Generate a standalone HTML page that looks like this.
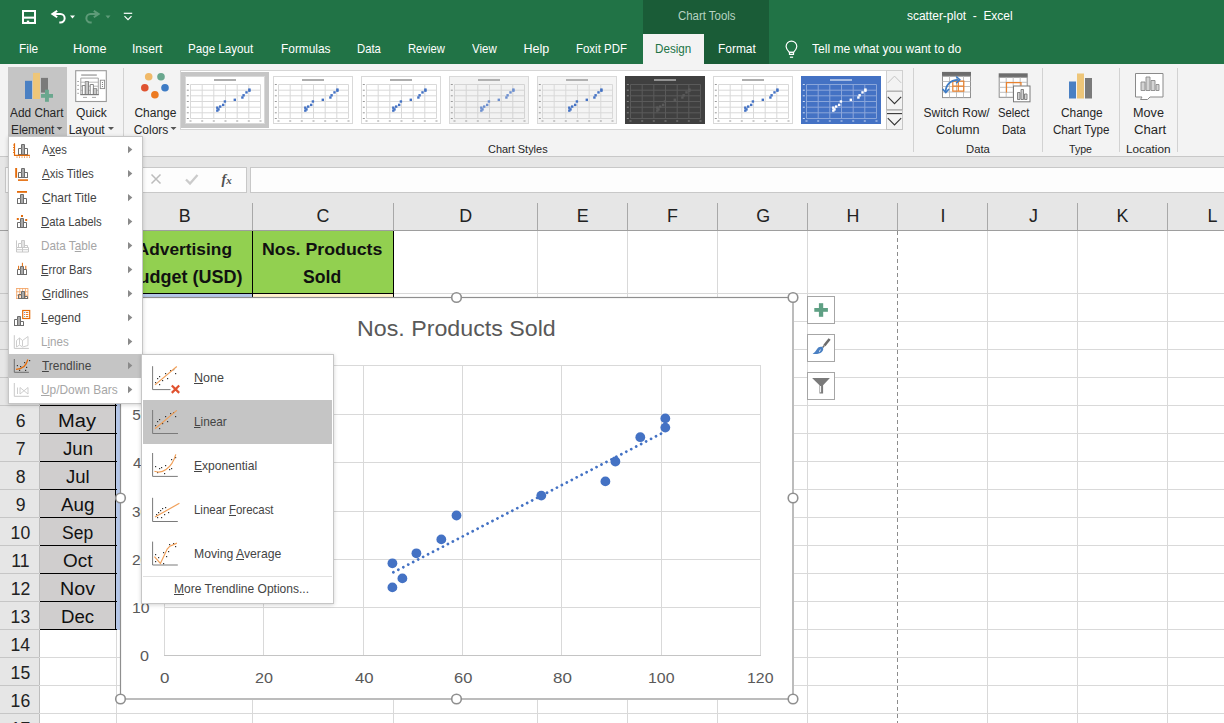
<!DOCTYPE html>
<html><head><meta charset="utf-8">
<style>
*{margin:0;padding:0;box-sizing:border-box}
html,body{width:1224px;height:723px;overflow:hidden;background:#fff;font-family:"Liberation Sans",sans-serif;position:relative}
.a{position:absolute}
.t{position:absolute;white-space:pre;line-height:1;transform-origin:0 0}
.sep{position:absolute;width:1px;background:#d2d2d2;top:68px;height:84px}
u{text-decoration:underline;text-decoration-thickness:1px;text-underline-offset:0.5px}
</style></head><body>
<!-- title -->
<div class="a" style="left:0;top:0;width:1224px;height:64px;background:#217346"></div>
<div class="a" style="left:643px;top:0;width:126px;height:64px;background:#1a5c37"></div>
<svg class="a" style="left:0;top:0" width="160" height="32">
 <path d="M23 11h12v12h-12z" fill="none" stroke="#fff" stroke-width="2"/>
 <rect x="24" y="16.6" width="10" height="2.1" fill="#fff"/>
 <rect x="26.8" y="20.6" width="2.4" height="2" fill="#fff"/>
 <path d="M53.5 14.1h7a4.15 4.15 0 0 1 0 8.3h-1.2" fill="none" stroke="#fff" stroke-width="2"/>
 <path d="M50.6 14.1l6-4 1.2 1.7-3.6 2.3 3.6 2.3-1.2 1.7z" fill="#fff"/>
 <path d="M70 15.5h5l-2.5 3z" fill="#fff"/>
 <path d="M97.5 14.1h-7a4.15 4.15 0 0 0 0 8.3h1.2" fill="none" stroke="#5e9b78" stroke-width="2"/>
 <path d="M100.4 14.1l-6-4-1.2 1.7 3.6 2.3-3.6 2.3 1.2 1.7z" fill="#5e9b78"/>
 <path d="M105.5 15.5h5l-2.5 3z" fill="#5e9b78"/>
 <g fill="none" stroke="#fff" stroke-width="1.2">
  <path d="M123.8 13.3h8.4"/>
  <path d="M124.5 16.2l3.5 3.5 3.5-3.5"/>
 </g>
</svg>
<div class="a" style="left:643px;top:34px;width:61px;height:30px;background:#f3f3f3"></div>
<svg class="a" style="left:783px;top:38px" width="20" height="22">
 <g fill="none" stroke="#fff" stroke-width="1.2">
  <path d="M6.3 14.3C4.2 12.1 3.1 10.5 3.1 8.4a5.35 5.35 0 0 1 10.7 0c0 2.1-1.1 3.7-3.2 5.9z"/>
  <path d="M6.5 14.4h4v2h-4z"/>
  <path d="M6.9 19.2h3.2" stroke-width="1.2"/>
 </g>
</svg>
<div class="t" style="left:678.03px;top:10.43px;font-size:12.01px;color:#b7d3c2;transform:scaleX(0.950)">Chart Tools</div>
<div class="t" style="left:906.86px;top:10.43px;font-size:12.01px;color:#fff;transform:scaleX(0.996)">scatter-plot  -  Excel</div>
<div class="t" style="left:19.45px;top:43.31px;font-size:12.54px;color:#fff;transform:scaleX(0.949)">File</div>
<div class="t" style="left:72.89px;top:43.31px;font-size:12.54px;color:#fff;transform:scaleX(1.006)">Home</div>
<div class="t" style="left:131.71px;top:43.31px;font-size:12.54px;color:#fff;transform:scaleX(0.968)">Insert</div>
<div class="t" style="left:188.37px;top:43.31px;font-size:12.54px;color:#fff;transform:scaleX(0.926)">Page Layout</div>
<div class="t" style="left:280.85px;top:43.31px;font-size:12.54px;color:#fff;transform:scaleX(0.949)">Formulas</div>
<div class="t" style="left:356.70px;top:43.31px;font-size:12.54px;color:#fff;transform:scaleX(0.901)">Data</div>
<div class="t" style="left:407.70px;top:43.31px;font-size:12.54px;color:#fff;transform:scaleX(0.895)">Review</div>
<div class="t" style="left:472.10px;top:43.31px;font-size:12.54px;color:#fff;transform:scaleX(0.917)">View</div>
<div class="t" style="left:523.40px;top:43.31px;font-size:12.54px;color:#fff">Help</div>
<div class="t" style="left:575.58px;top:43.31px;font-size:12.54px;color:#fff;transform:scaleX(0.914)">Foxit PDF</div>
<div class="t" style="left:654.67px;top:43.31px;font-size:12.54px;color:#217346;transform:scaleX(0.929)">Design</div>
<div class="t" style="left:717.74px;top:43.31px;font-size:12.54px;color:#fff;transform:scaleX(0.952)">Format</div>
<div class="t" style="left:811.56px;top:43.31px;font-size:12.54px;color:#fff;transform:scaleX(0.965)">Tell me what you want to do</div>
<!-- ribbon -->
<div class="a" style="left:0;top:64px;width:1224px;height:93px;background:#f3f3f3;border-bottom:1px solid #c8c8c8"></div>
<div class="a" style="left:8px;top:67px;width:59px;height:70px;background:#c5c5c5"></div>
<svg class="a" style="left:0;top:64px" width="125" height="40">
 <rect x="25" y="16.8" width="7" height="18.2" fill="#4a80c3"/>
 <rect x="33" y="8.9" width="7" height="26.1" fill="#eec679"/>
 <rect x="41" y="13.9" width="7" height="14.7" fill="#7a7a7a"/>
 <rect x="41" y="30" width="12" height="3.8" fill="#6aa78e"/>
 <rect x="45" y="25.7" width="3.9" height="12.1" fill="#6aa78e"/>
 <rect x="75.7" y="6.7" width="30.6" height="30.8" fill="#fff" stroke="#9a9a9a" stroke-width="1.1"/>
 <rect x="81.2" y="10.3" width="15.6" height="1.5" fill="#a8a8a8"/>
 <path d="M80.8 30.6V14.1h17.5v16.5" fill="none" stroke="#9a9a9a" stroke-width="0.9"/>
 <path d="M80.8 18.2h17.5M80.8 22.2h17.5M80.8 26.3h17.5" stroke="#b0b0b0" stroke-width="0.9"/>
 <path d="M82.3 30.5v-9h3v9zM85.3 30.5v-13h3.2v13zM90.2 30.5v-10h3.2v10zM93.4 30.5v-6h3.2v6z" fill="#fff" stroke="#7a7a7a" stroke-width="0.9"/>
 <path d="M85.8 30v-12.2h2.2v12.2zM93.9 30v-5.2h2.2v5.2z" fill="#c9c9c9"/>
 <path d="M80.3 30.6h18.5" stroke="#7a7a7a" stroke-width="1.2"/>
 <path d="M77.2 17.5h1.8M77.2 21.4h1.8M77.2 25.4h1.8M77.2 29.3h1.8M83 33.4h4M92 33.4h4" stroke="#a0a0a0" stroke-width="0.9"/>
 <rect x="100.3" y="16.2" width="4.3" height="8.4" fill="#fff" stroke="#8a8a8a" stroke-width="0.9"/>
 <path d="M102.45 18v1M102.45 20v1M102.45 22v1" stroke="#7a7a7a" stroke-width="1"/>
</svg>
<svg class="a" style="left:125px;top:64px" width="55" height="40">
 <circle cx="23.7" cy="12.8" r="3.8" fill="#f0b968"/>
 <circle cx="36" cy="12.8" r="3.8" fill="#6aa78e"/>
 <circle cx="19.8" cy="23.8" r="3.8" fill="#df5330"/>
 <circle cx="40" cy="23.8" r="3.8" fill="#3e7cc5"/>
 <circle cx="29.9" cy="30.8" r="3.8" fill="#ec7a21"/>
</svg>
<div class="sep" style="left:123px"></div>
<svg class="a" style="left:0;top:120px" width="180" height="14">
 <path d="M56.5 7h6l-3 3z M108 7h6l-3 3z M170.5 7h6l-3 3z" fill="#555"/>
</svg>
<!-- gallery -->
<div class="a" style="left:180px;top:70px;width:706px;height:60px;background:#fff;border:1px solid #d5d5d5;border-right:none"></div>
<div class="a" style="left:181px;top:72px;width:88px;height:56px;background:#c6c6c6"></div>
<div class="a" style="left:185px;top:76px;width:80px;height:48px;background:#fff"></div>
<svg class="a" style="left:185px;top:76px" width="80" height="48"><rect x="0.5" y="0.5" width="79" height="47" fill="#fff" stroke="#d9d9d9"/><rect x="29" y="3.3" width="22" height="1.4" fill="#666" opacity="0.75"/><line x1="5.5" y1="8.5" x2="5.5" y2="42.5" stroke="#d9d9d9" stroke-width="1"/><line x1="17.2" y1="8.5" x2="17.2" y2="42.5" stroke="#d9d9d9" stroke-width="1"/><line x1="28.8" y1="8.5" x2="28.8" y2="42.5" stroke="#d9d9d9" stroke-width="1"/><line x1="40.5" y1="8.5" x2="40.5" y2="42.5" stroke="#d9d9d9" stroke-width="1"/><line x1="52.2" y1="8.5" x2="52.2" y2="42.5" stroke="#d9d9d9" stroke-width="1"/><line x1="63.8" y1="8.5" x2="63.8" y2="42.5" stroke="#d9d9d9" stroke-width="1"/><line x1="75.5" y1="8.5" x2="75.5" y2="42.5" stroke="#d9d9d9" stroke-width="1"/><line x1="5.5" y1="8.5" x2="75.5" y2="8.5" stroke="#d9d9d9" stroke-width="1"/><line x1="5.5" y1="14.2" x2="75.5" y2="14.2" stroke="#d9d9d9" stroke-width="1"/><line x1="5.5" y1="19.8" x2="75.5" y2="19.8" stroke="#d9d9d9" stroke-width="1"/><line x1="5.5" y1="25.5" x2="75.5" y2="25.5" stroke="#d9d9d9" stroke-width="1"/><line x1="5.5" y1="31.2" x2="75.5" y2="31.2" stroke="#d9d9d9" stroke-width="1"/><line x1="5.5" y1="36.8" x2="75.5" y2="36.8" stroke="#d9d9d9" stroke-width="1"/><line x1="5.5" y1="42.5" x2="75.5" y2="42.5" stroke="#d9d9d9" stroke-width="1"/><rect x="4.5" y="44.5" width="2" height="1" fill="#999"/><rect x="1.8" y="8.0" width="2" height="1" fill="#999"/><rect x="16.2" y="44.5" width="2" height="1" fill="#999"/><rect x="1.8" y="13.7" width="2" height="1" fill="#999"/><rect x="27.8" y="44.5" width="2" height="1" fill="#999"/><rect x="1.8" y="19.3" width="2" height="1" fill="#999"/><rect x="39.5" y="44.5" width="2" height="1" fill="#999"/><rect x="1.8" y="25.0" width="2" height="1" fill="#999"/><rect x="51.2" y="44.5" width="2" height="1" fill="#999"/><rect x="1.8" y="30.7" width="2" height="1" fill="#999"/><rect x="62.8" y="44.5" width="2" height="1" fill="#999"/><rect x="1.8" y="36.3" width="2" height="1" fill="#999"/><rect x="74.5" y="44.5" width="2" height="1" fill="#999"/><rect x="1.8" y="42.0" width="2" height="1" fill="#999"/><rect x="31.1" y="33.4" width="2.4" height="2.4" fill="#4472c4"/><rect x="31.1" y="30.5" width="2.4" height="2.4" fill="#4472c4"/><rect x="32.3" y="32.2" width="2.4" height="2.4" fill="#4472c4"/><rect x="34.0" y="29.4" width="2.4" height="2.4" fill="#4472c4"/><rect x="37.0" y="27.7" width="2.4" height="2.4" fill="#4472c4"/><rect x="38.7" y="24.3" width="2.4" height="2.4" fill="#4472c4"/><rect x="48.6" y="22.6" width="2.4" height="2.4" fill="#4472c4"/><rect x="56.2" y="20.3" width="2.4" height="2.4" fill="#4472c4"/><rect x="57.4" y="18.1" width="2.4" height="2.4" fill="#4472c4"/><rect x="60.3" y="15.2" width="2.4" height="2.4" fill="#4472c4"/><rect x="63.2" y="13.5" width="2.4" height="2.4" fill="#4472c4"/><rect x="63.2" y="12.4" width="2.4" height="2.4" fill="#4472c4"/></svg>
<svg class="a" style="left:273px;top:76px" width="80" height="48"><rect x="0.5" y="0.5" width="79" height="47" fill="#fff" stroke="#d9d9d9"/><rect x="29" y="3.3" width="22" height="1.4" fill="#666" opacity="0.75"/><line x1="5.5" y1="8.5" x2="5.5" y2="42.5" stroke="#d9d9d9" stroke-width="1"/><line x1="17.2" y1="8.5" x2="17.2" y2="42.5" stroke="#d9d9d9" stroke-width="1"/><line x1="28.8" y1="8.5" x2="28.8" y2="42.5" stroke="#d9d9d9" stroke-width="1"/><line x1="40.5" y1="8.5" x2="40.5" y2="42.5" stroke="#d9d9d9" stroke-width="1"/><line x1="52.2" y1="8.5" x2="52.2" y2="42.5" stroke="#d9d9d9" stroke-width="1"/><line x1="63.8" y1="8.5" x2="63.8" y2="42.5" stroke="#d9d9d9" stroke-width="1"/><line x1="75.5" y1="8.5" x2="75.5" y2="42.5" stroke="#d9d9d9" stroke-width="1"/><line x1="5.5" y1="8.5" x2="75.5" y2="8.5" stroke="#d9d9d9" stroke-width="1"/><line x1="5.5" y1="14.2" x2="75.5" y2="14.2" stroke="#d9d9d9" stroke-width="1"/><line x1="5.5" y1="19.8" x2="75.5" y2="19.8" stroke="#d9d9d9" stroke-width="1"/><line x1="5.5" y1="25.5" x2="75.5" y2="25.5" stroke="#d9d9d9" stroke-width="1"/><line x1="5.5" y1="31.2" x2="75.5" y2="31.2" stroke="#d9d9d9" stroke-width="1"/><line x1="5.5" y1="36.8" x2="75.5" y2="36.8" stroke="#d9d9d9" stroke-width="1"/><line x1="5.5" y1="42.5" x2="75.5" y2="42.5" stroke="#d9d9d9" stroke-width="1"/><rect x="4.5" y="44.5" width="2" height="1" fill="#999"/><rect x="1.8" y="8.0" width="2" height="1" fill="#999"/><rect x="16.2" y="44.5" width="2" height="1" fill="#999"/><rect x="1.8" y="13.7" width="2" height="1" fill="#999"/><rect x="27.8" y="44.5" width="2" height="1" fill="#999"/><rect x="1.8" y="19.3" width="2" height="1" fill="#999"/><rect x="39.5" y="44.5" width="2" height="1" fill="#999"/><rect x="1.8" y="25.0" width="2" height="1" fill="#999"/><rect x="51.2" y="44.5" width="2" height="1" fill="#999"/><rect x="1.8" y="30.7" width="2" height="1" fill="#999"/><rect x="62.8" y="44.5" width="2" height="1" fill="#999"/><rect x="1.8" y="36.3" width="2" height="1" fill="#999"/><rect x="74.5" y="44.5" width="2" height="1" fill="#999"/><rect x="1.8" y="42.0" width="2" height="1" fill="#999"/><rect x="31.1" y="33.4" width="2.4" height="2.4" fill="#4472c4"/><rect x="31.1" y="30.5" width="2.4" height="2.4" fill="#4472c4"/><rect x="32.3" y="32.2" width="2.4" height="2.4" fill="#4472c4"/><rect x="34.0" y="29.4" width="2.4" height="2.4" fill="#4472c4"/><rect x="37.0" y="27.7" width="2.4" height="2.4" fill="#4472c4"/><rect x="38.7" y="24.3" width="2.4" height="2.4" fill="#4472c4"/><rect x="48.6" y="22.6" width="2.4" height="2.4" fill="#4472c4"/><rect x="56.2" y="20.3" width="2.4" height="2.4" fill="#4472c4"/><rect x="57.4" y="18.1" width="2.4" height="2.4" fill="#4472c4"/><rect x="60.3" y="15.2" width="2.4" height="2.4" fill="#4472c4"/><rect x="63.2" y="13.5" width="2.4" height="2.4" fill="#4472c4"/><rect x="63.2" y="12.4" width="2.4" height="2.4" fill="#4472c4"/></svg>
<svg class="a" style="left:361px;top:76px" width="80" height="48"><rect x="0.5" y="0.5" width="79" height="47" fill="#fff" stroke="#d9d9d9"/><rect x="29" y="3.3" width="22" height="1.4" fill="#666" opacity="0.75"/><line x1="5.5" y1="8.5" x2="5.5" y2="42.5" stroke="#d9d9d9" stroke-width="1"/><line x1="17.2" y1="8.5" x2="17.2" y2="42.5" stroke="#d9d9d9" stroke-width="1"/><line x1="28.8" y1="8.5" x2="28.8" y2="42.5" stroke="#d9d9d9" stroke-width="1"/><line x1="40.5" y1="8.5" x2="40.5" y2="42.5" stroke="#d9d9d9" stroke-width="1"/><line x1="52.2" y1="8.5" x2="52.2" y2="42.5" stroke="#d9d9d9" stroke-width="1"/><line x1="63.8" y1="8.5" x2="63.8" y2="42.5" stroke="#d9d9d9" stroke-width="1"/><line x1="75.5" y1="8.5" x2="75.5" y2="42.5" stroke="#d9d9d9" stroke-width="1"/><line x1="5.5" y1="8.5" x2="75.5" y2="8.5" stroke="#d9d9d9" stroke-width="1"/><line x1="5.5" y1="14.2" x2="75.5" y2="14.2" stroke="#d9d9d9" stroke-width="1"/><line x1="5.5" y1="19.8" x2="75.5" y2="19.8" stroke="#d9d9d9" stroke-width="1"/><line x1="5.5" y1="25.5" x2="75.5" y2="25.5" stroke="#d9d9d9" stroke-width="1"/><line x1="5.5" y1="31.2" x2="75.5" y2="31.2" stroke="#d9d9d9" stroke-width="1"/><line x1="5.5" y1="36.8" x2="75.5" y2="36.8" stroke="#d9d9d9" stroke-width="1"/><line x1="5.5" y1="42.5" x2="75.5" y2="42.5" stroke="#d9d9d9" stroke-width="1"/><rect x="4.5" y="44.5" width="2" height="1" fill="#999"/><rect x="1.8" y="8.0" width="2" height="1" fill="#999"/><rect x="16.2" y="44.5" width="2" height="1" fill="#999"/><rect x="1.8" y="13.7" width="2" height="1" fill="#999"/><rect x="27.8" y="44.5" width="2" height="1" fill="#999"/><rect x="1.8" y="19.3" width="2" height="1" fill="#999"/><rect x="39.5" y="44.5" width="2" height="1" fill="#999"/><rect x="1.8" y="25.0" width="2" height="1" fill="#999"/><rect x="51.2" y="44.5" width="2" height="1" fill="#999"/><rect x="1.8" y="30.7" width="2" height="1" fill="#999"/><rect x="62.8" y="44.5" width="2" height="1" fill="#999"/><rect x="1.8" y="36.3" width="2" height="1" fill="#999"/><rect x="74.5" y="44.5" width="2" height="1" fill="#999"/><rect x="1.8" y="42.0" width="2" height="1" fill="#999"/><rect x="31.1" y="33.4" width="2.4" height="2.4" fill="#4472c4"/><rect x="31.1" y="30.5" width="2.4" height="2.4" fill="#4472c4"/><rect x="32.3" y="32.2" width="2.4" height="2.4" fill="#4472c4"/><rect x="34.0" y="29.4" width="2.4" height="2.4" fill="#4472c4"/><rect x="37.0" y="27.7" width="2.4" height="2.4" fill="#4472c4"/><rect x="38.7" y="24.3" width="2.4" height="2.4" fill="#4472c4"/><rect x="48.6" y="22.6" width="2.4" height="2.4" fill="#4472c4"/><rect x="56.2" y="20.3" width="2.4" height="2.4" fill="#4472c4"/><rect x="57.4" y="18.1" width="2.4" height="2.4" fill="#4472c4"/><rect x="60.3" y="15.2" width="2.4" height="2.4" fill="#4472c4"/><rect x="63.2" y="13.5" width="2.4" height="2.4" fill="#4472c4"/><rect x="63.2" y="12.4" width="2.4" height="2.4" fill="#4472c4"/></svg>
<svg class="a" style="left:449px;top:76px" width="80" height="48"><rect x="0.5" y="0.5" width="79" height="47" fill="#f2f2f2" stroke="#d9d9d9"/><rect x="29" y="3.3" width="22" height="1.4" fill="#777" opacity="0.75"/><line x1="5.5" y1="8.5" x2="5.5" y2="42.5" stroke="#d4d4d4" stroke-width="1"/><line x1="17.2" y1="8.5" x2="17.2" y2="42.5" stroke="#d4d4d4" stroke-width="1"/><line x1="28.8" y1="8.5" x2="28.8" y2="42.5" stroke="#d4d4d4" stroke-width="1"/><line x1="40.5" y1="8.5" x2="40.5" y2="42.5" stroke="#d4d4d4" stroke-width="1"/><line x1="52.2" y1="8.5" x2="52.2" y2="42.5" stroke="#d4d4d4" stroke-width="1"/><line x1="63.8" y1="8.5" x2="63.8" y2="42.5" stroke="#d4d4d4" stroke-width="1"/><line x1="75.5" y1="8.5" x2="75.5" y2="42.5" stroke="#d4d4d4" stroke-width="1"/><line x1="5.5" y1="8.5" x2="75.5" y2="8.5" stroke="#d4d4d4" stroke-width="1"/><line x1="5.5" y1="14.2" x2="75.5" y2="14.2" stroke="#d4d4d4" stroke-width="1"/><line x1="5.5" y1="19.8" x2="75.5" y2="19.8" stroke="#d4d4d4" stroke-width="1"/><line x1="5.5" y1="25.5" x2="75.5" y2="25.5" stroke="#d4d4d4" stroke-width="1"/><line x1="5.5" y1="31.2" x2="75.5" y2="31.2" stroke="#d4d4d4" stroke-width="1"/><line x1="5.5" y1="36.8" x2="75.5" y2="36.8" stroke="#d4d4d4" stroke-width="1"/><line x1="5.5" y1="42.5" x2="75.5" y2="42.5" stroke="#d4d4d4" stroke-width="1"/><rect x="4.5" y="44.5" width="2" height="1" fill="#999"/><rect x="1.8" y="8.0" width="2" height="1" fill="#999"/><rect x="16.2" y="44.5" width="2" height="1" fill="#999"/><rect x="1.8" y="13.7" width="2" height="1" fill="#999"/><rect x="27.8" y="44.5" width="2" height="1" fill="#999"/><rect x="1.8" y="19.3" width="2" height="1" fill="#999"/><rect x="39.5" y="44.5" width="2" height="1" fill="#999"/><rect x="1.8" y="25.0" width="2" height="1" fill="#999"/><rect x="51.2" y="44.5" width="2" height="1" fill="#999"/><rect x="1.8" y="30.7" width="2" height="1" fill="#999"/><rect x="62.8" y="44.5" width="2" height="1" fill="#999"/><rect x="1.8" y="36.3" width="2" height="1" fill="#999"/><rect x="74.5" y="44.5" width="2" height="1" fill="#999"/><rect x="1.8" y="42.0" width="2" height="1" fill="#999"/><rect x="31.1" y="33.4" width="2.4" height="2.4" fill="#6d8fcf"/><rect x="31.1" y="30.5" width="2.4" height="2.4" fill="#6d8fcf"/><rect x="32.3" y="32.2" width="2.4" height="2.4" fill="#6d8fcf"/><rect x="34.0" y="29.4" width="2.4" height="2.4" fill="#6d8fcf"/><rect x="37.0" y="27.7" width="2.4" height="2.4" fill="#6d8fcf"/><rect x="38.7" y="24.3" width="2.4" height="2.4" fill="#6d8fcf"/><rect x="48.6" y="22.6" width="2.4" height="2.4" fill="#6d8fcf"/><rect x="56.2" y="20.3" width="2.4" height="2.4" fill="#6d8fcf"/><rect x="57.4" y="18.1" width="2.4" height="2.4" fill="#6d8fcf"/><rect x="60.3" y="15.2" width="2.4" height="2.4" fill="#6d8fcf"/><rect x="63.2" y="13.5" width="2.4" height="2.4" fill="#6d8fcf"/><rect x="63.2" y="12.4" width="2.4" height="2.4" fill="#6d8fcf"/></svg>
<svg class="a" style="left:537px;top:76px" width="80" height="48"><rect x="0.5" y="0.5" width="79" height="47" fill="#f4f4f4" stroke="#d9d9d9"/><rect x="29" y="3.3" width="22" height="1.4" fill="#777" opacity="0.75"/><line x1="5.5" y1="8.5" x2="5.5" y2="42.5" stroke="#d9d9d9" stroke-width="1"/><line x1="17.2" y1="8.5" x2="17.2" y2="42.5" stroke="#d9d9d9" stroke-width="1"/><line x1="28.8" y1="8.5" x2="28.8" y2="42.5" stroke="#d9d9d9" stroke-width="1"/><line x1="40.5" y1="8.5" x2="40.5" y2="42.5" stroke="#d9d9d9" stroke-width="1"/><line x1="52.2" y1="8.5" x2="52.2" y2="42.5" stroke="#d9d9d9" stroke-width="1"/><line x1="63.8" y1="8.5" x2="63.8" y2="42.5" stroke="#d9d9d9" stroke-width="1"/><line x1="75.5" y1="8.5" x2="75.5" y2="42.5" stroke="#d9d9d9" stroke-width="1"/><line x1="5.5" y1="8.5" x2="75.5" y2="8.5" stroke="#d9d9d9" stroke-width="1"/><line x1="5.5" y1="14.2" x2="75.5" y2="14.2" stroke="#d9d9d9" stroke-width="1"/><line x1="5.5" y1="19.8" x2="75.5" y2="19.8" stroke="#d9d9d9" stroke-width="1"/><line x1="5.5" y1="25.5" x2="75.5" y2="25.5" stroke="#d9d9d9" stroke-width="1"/><line x1="5.5" y1="31.2" x2="75.5" y2="31.2" stroke="#d9d9d9" stroke-width="1"/><line x1="5.5" y1="36.8" x2="75.5" y2="36.8" stroke="#d9d9d9" stroke-width="1"/><line x1="5.5" y1="42.5" x2="75.5" y2="42.5" stroke="#d9d9d9" stroke-width="1"/><rect x="4.5" y="44.5" width="2" height="1" fill="#999"/><rect x="1.8" y="8.0" width="2" height="1" fill="#999"/><rect x="16.2" y="44.5" width="2" height="1" fill="#999"/><rect x="1.8" y="13.7" width="2" height="1" fill="#999"/><rect x="27.8" y="44.5" width="2" height="1" fill="#999"/><rect x="1.8" y="19.3" width="2" height="1" fill="#999"/><rect x="39.5" y="44.5" width="2" height="1" fill="#999"/><rect x="1.8" y="25.0" width="2" height="1" fill="#999"/><rect x="51.2" y="44.5" width="2" height="1" fill="#999"/><rect x="1.8" y="30.7" width="2" height="1" fill="#999"/><rect x="62.8" y="44.5" width="2" height="1" fill="#999"/><rect x="1.8" y="36.3" width="2" height="1" fill="#999"/><rect x="74.5" y="44.5" width="2" height="1" fill="#999"/><rect x="1.8" y="42.0" width="2" height="1" fill="#999"/><rect x="31.1" y="33.4" width="2.4" height="2.4" fill="#4472c4"/><rect x="31.1" y="30.5" width="2.4" height="2.4" fill="#4472c4"/><rect x="32.3" y="32.2" width="2.4" height="2.4" fill="#4472c4"/><rect x="34.0" y="29.4" width="2.4" height="2.4" fill="#4472c4"/><rect x="37.0" y="27.7" width="2.4" height="2.4" fill="#4472c4"/><rect x="38.7" y="24.3" width="2.4" height="2.4" fill="#4472c4"/><rect x="48.6" y="22.6" width="2.4" height="2.4" fill="#4472c4"/><rect x="56.2" y="20.3" width="2.4" height="2.4" fill="#4472c4"/><rect x="57.4" y="18.1" width="2.4" height="2.4" fill="#4472c4"/><rect x="60.3" y="15.2" width="2.4" height="2.4" fill="#4472c4"/><rect x="63.2" y="13.5" width="2.4" height="2.4" fill="#4472c4"/><rect x="63.2" y="12.4" width="2.4" height="2.4" fill="#4472c4"/></svg>
<svg class="a" style="left:625px;top:76px" width="80" height="48"><rect x="0.5" y="0.5" width="79" height="47" fill="#404040" stroke="#404040"/><rect x="29" y="3.3" width="22" height="1.4" fill="#e0e0e0" opacity="0.75"/><line x1="5.5" y1="8.5" x2="5.5" y2="42.5" stroke="#5a5a5a" stroke-width="1"/><line x1="17.2" y1="8.5" x2="17.2" y2="42.5" stroke="#5a5a5a" stroke-width="1"/><line x1="28.8" y1="8.5" x2="28.8" y2="42.5" stroke="#5a5a5a" stroke-width="1"/><line x1="40.5" y1="8.5" x2="40.5" y2="42.5" stroke="#5a5a5a" stroke-width="1"/><line x1="52.2" y1="8.5" x2="52.2" y2="42.5" stroke="#5a5a5a" stroke-width="1"/><line x1="63.8" y1="8.5" x2="63.8" y2="42.5" stroke="#5a5a5a" stroke-width="1"/><line x1="75.5" y1="8.5" x2="75.5" y2="42.5" stroke="#5a5a5a" stroke-width="1"/><line x1="5.5" y1="8.5" x2="75.5" y2="8.5" stroke="#5a5a5a" stroke-width="1"/><line x1="5.5" y1="14.2" x2="75.5" y2="14.2" stroke="#5a5a5a" stroke-width="1"/><line x1="5.5" y1="19.8" x2="75.5" y2="19.8" stroke="#5a5a5a" stroke-width="1"/><line x1="5.5" y1="25.5" x2="75.5" y2="25.5" stroke="#5a5a5a" stroke-width="1"/><line x1="5.5" y1="31.2" x2="75.5" y2="31.2" stroke="#5a5a5a" stroke-width="1"/><line x1="5.5" y1="36.8" x2="75.5" y2="36.8" stroke="#5a5a5a" stroke-width="1"/><line x1="5.5" y1="42.5" x2="75.5" y2="42.5" stroke="#5a5a5a" stroke-width="1"/><rect x="4.5" y="44.5" width="2" height="1" fill="#888"/><rect x="1.8" y="8.0" width="2" height="1" fill="#888"/><rect x="16.2" y="44.5" width="2" height="1" fill="#888"/><rect x="1.8" y="13.7" width="2" height="1" fill="#888"/><rect x="27.8" y="44.5" width="2" height="1" fill="#888"/><rect x="1.8" y="19.3" width="2" height="1" fill="#888"/><rect x="39.5" y="44.5" width="2" height="1" fill="#888"/><rect x="1.8" y="25.0" width="2" height="1" fill="#888"/><rect x="51.2" y="44.5" width="2" height="1" fill="#888"/><rect x="1.8" y="30.7" width="2" height="1" fill="#888"/><rect x="62.8" y="44.5" width="2" height="1" fill="#888"/><rect x="1.8" y="36.3" width="2" height="1" fill="#888"/><rect x="74.5" y="44.5" width="2" height="1" fill="#888"/><rect x="1.8" y="42.0" width="2" height="1" fill="#888"/><rect x="31.1" y="33.4" width="2.4" height="2.4" fill="#5a5a5a"/><rect x="31.1" y="30.5" width="2.4" height="2.4" fill="#5a5a5a"/><rect x="32.3" y="32.2" width="2.4" height="2.4" fill="#5a5a5a"/><rect x="34.0" y="29.4" width="2.4" height="2.4" fill="#5a5a5a"/><rect x="37.0" y="27.7" width="2.4" height="2.4" fill="#5a5a5a"/><rect x="38.7" y="24.3" width="2.4" height="2.4" fill="#5a5a5a"/><rect x="48.6" y="22.6" width="2.4" height="2.4" fill="#5a5a5a"/><rect x="56.2" y="20.3" width="2.4" height="2.4" fill="#5a5a5a"/><rect x="57.4" y="18.1" width="2.4" height="2.4" fill="#5a5a5a"/><rect x="60.3" y="15.2" width="2.4" height="2.4" fill="#5a5a5a"/><rect x="63.2" y="13.5" width="2.4" height="2.4" fill="#5a5a5a"/><rect x="63.2" y="12.4" width="2.4" height="2.4" fill="#5a5a5a"/></svg>
<svg class="a" style="left:713px;top:76px" width="80" height="48"><rect x="0.5" y="0.5" width="79" height="47" fill="#fff" stroke="#d9d9d9"/><rect x="29" y="3.3" width="22" height="1.4" fill="#666" opacity="0.75"/><line x1="5.5" y1="8.5" x2="5.5" y2="42.5" stroke="#d9d9d9" stroke-width="1"/><line x1="17.2" y1="8.5" x2="17.2" y2="42.5" stroke="#d9d9d9" stroke-width="1"/><line x1="28.8" y1="8.5" x2="28.8" y2="42.5" stroke="#d9d9d9" stroke-width="1"/><line x1="40.5" y1="8.5" x2="40.5" y2="42.5" stroke="#d9d9d9" stroke-width="1"/><line x1="52.2" y1="8.5" x2="52.2" y2="42.5" stroke="#d9d9d9" stroke-width="1"/><line x1="63.8" y1="8.5" x2="63.8" y2="42.5" stroke="#d9d9d9" stroke-width="1"/><line x1="75.5" y1="8.5" x2="75.5" y2="42.5" stroke="#d9d9d9" stroke-width="1"/><line x1="5.5" y1="8.5" x2="75.5" y2="8.5" stroke="#d9d9d9" stroke-width="1"/><line x1="5.5" y1="14.2" x2="75.5" y2="14.2" stroke="#d9d9d9" stroke-width="1"/><line x1="5.5" y1="19.8" x2="75.5" y2="19.8" stroke="#d9d9d9" stroke-width="1"/><line x1="5.5" y1="25.5" x2="75.5" y2="25.5" stroke="#d9d9d9" stroke-width="1"/><line x1="5.5" y1="31.2" x2="75.5" y2="31.2" stroke="#d9d9d9" stroke-width="1"/><line x1="5.5" y1="36.8" x2="75.5" y2="36.8" stroke="#d9d9d9" stroke-width="1"/><line x1="5.5" y1="42.5" x2="75.5" y2="42.5" stroke="#d9d9d9" stroke-width="1"/><rect x="4.5" y="44.5" width="2" height="1" fill="#999"/><rect x="1.8" y="8.0" width="2" height="1" fill="#999"/><rect x="16.2" y="44.5" width="2" height="1" fill="#999"/><rect x="1.8" y="13.7" width="2" height="1" fill="#999"/><rect x="27.8" y="44.5" width="2" height="1" fill="#999"/><rect x="1.8" y="19.3" width="2" height="1" fill="#999"/><rect x="39.5" y="44.5" width="2" height="1" fill="#999"/><rect x="1.8" y="25.0" width="2" height="1" fill="#999"/><rect x="51.2" y="44.5" width="2" height="1" fill="#999"/><rect x="1.8" y="30.7" width="2" height="1" fill="#999"/><rect x="62.8" y="44.5" width="2" height="1" fill="#999"/><rect x="1.8" y="36.3" width="2" height="1" fill="#999"/><rect x="74.5" y="44.5" width="2" height="1" fill="#999"/><rect x="1.8" y="42.0" width="2" height="1" fill="#999"/><rect x="31.1" y="33.4" width="2.4" height="2.4" fill="#4472c4"/><rect x="31.1" y="30.5" width="2.4" height="2.4" fill="#4472c4"/><rect x="32.3" y="32.2" width="2.4" height="2.4" fill="#4472c4"/><rect x="34.0" y="29.4" width="2.4" height="2.4" fill="#4472c4"/><rect x="37.0" y="27.7" width="2.4" height="2.4" fill="#4472c4"/><rect x="38.7" y="24.3" width="2.4" height="2.4" fill="#4472c4"/><rect x="48.6" y="22.6" width="2.4" height="2.4" fill="#4472c4"/><rect x="56.2" y="20.3" width="2.4" height="2.4" fill="#4472c4"/><rect x="57.4" y="18.1" width="2.4" height="2.4" fill="#4472c4"/><rect x="60.3" y="15.2" width="2.4" height="2.4" fill="#4472c4"/><rect x="63.2" y="13.5" width="2.4" height="2.4" fill="#4472c4"/><rect x="63.2" y="12.4" width="2.4" height="2.4" fill="#4472c4"/></svg>
<svg class="a" style="left:801px;top:76px" width="80" height="48"><rect x="0.5" y="0.5" width="79" height="47" fill="#4472c4" stroke="#4472c4"/><rect x="29" y="3.3" width="22" height="1.4" fill="#fff" opacity="0.75"/><line x1="5.5" y1="8.5" x2="5.5" y2="42.5" stroke="#8aa6da" stroke-width="1"/><line x1="17.2" y1="8.5" x2="17.2" y2="42.5" stroke="#8aa6da" stroke-width="1"/><line x1="28.8" y1="8.5" x2="28.8" y2="42.5" stroke="#8aa6da" stroke-width="1"/><line x1="40.5" y1="8.5" x2="40.5" y2="42.5" stroke="#8aa6da" stroke-width="1"/><line x1="52.2" y1="8.5" x2="52.2" y2="42.5" stroke="#8aa6da" stroke-width="1"/><line x1="63.8" y1="8.5" x2="63.8" y2="42.5" stroke="#8aa6da" stroke-width="1"/><line x1="75.5" y1="8.5" x2="75.5" y2="42.5" stroke="#8aa6da" stroke-width="1"/><line x1="5.5" y1="8.5" x2="75.5" y2="8.5" stroke="#8aa6da" stroke-width="1"/><line x1="5.5" y1="14.2" x2="75.5" y2="14.2" stroke="#8aa6da" stroke-width="1"/><line x1="5.5" y1="19.8" x2="75.5" y2="19.8" stroke="#8aa6da" stroke-width="1"/><line x1="5.5" y1="25.5" x2="75.5" y2="25.5" stroke="#8aa6da" stroke-width="1"/><line x1="5.5" y1="31.2" x2="75.5" y2="31.2" stroke="#8aa6da" stroke-width="1"/><line x1="5.5" y1="36.8" x2="75.5" y2="36.8" stroke="#8aa6da" stroke-width="1"/><line x1="5.5" y1="42.5" x2="75.5" y2="42.5" stroke="#8aa6da" stroke-width="1"/><rect x="4.5" y="44.5" width="2" height="1" fill="#cfdcf2"/><rect x="1.8" y="8.0" width="2" height="1" fill="#cfdcf2"/><rect x="16.2" y="44.5" width="2" height="1" fill="#cfdcf2"/><rect x="1.8" y="13.7" width="2" height="1" fill="#cfdcf2"/><rect x="27.8" y="44.5" width="2" height="1" fill="#cfdcf2"/><rect x="1.8" y="19.3" width="2" height="1" fill="#cfdcf2"/><rect x="39.5" y="44.5" width="2" height="1" fill="#cfdcf2"/><rect x="1.8" y="25.0" width="2" height="1" fill="#cfdcf2"/><rect x="51.2" y="44.5" width="2" height="1" fill="#cfdcf2"/><rect x="1.8" y="30.7" width="2" height="1" fill="#cfdcf2"/><rect x="62.8" y="44.5" width="2" height="1" fill="#cfdcf2"/><rect x="1.8" y="36.3" width="2" height="1" fill="#cfdcf2"/><rect x="74.5" y="44.5" width="2" height="1" fill="#cfdcf2"/><rect x="1.8" y="42.0" width="2" height="1" fill="#cfdcf2"/><rect x="31.1" y="33.4" width="2.4" height="2.4" fill="#fff"/><rect x="31.1" y="30.5" width="2.4" height="2.4" fill="#fff"/><rect x="32.3" y="32.2" width="2.4" height="2.4" fill="#fff"/><rect x="34.0" y="29.4" width="2.4" height="2.4" fill="#fff"/><rect x="37.0" y="27.7" width="2.4" height="2.4" fill="#fff"/><rect x="38.7" y="24.3" width="2.4" height="2.4" fill="#fff"/><rect x="48.6" y="22.6" width="2.4" height="2.4" fill="#fff"/><rect x="56.2" y="20.3" width="2.4" height="2.4" fill="#fff"/><rect x="57.4" y="18.1" width="2.4" height="2.4" fill="#fff"/><rect x="60.3" y="15.2" width="2.4" height="2.4" fill="#fff"/><rect x="63.2" y="13.5" width="2.4" height="2.4" fill="#fff"/><rect x="63.2" y="12.4" width="2.4" height="2.4" fill="#fff"/></svg>
<div class="a" style="left:886px;top:70px;width:17px;height:21px;border:1px solid #d0d0d0;background:#f3f3f3"></div>
<div class="a" style="left:886px;top:91px;width:17px;height:19px;border:1px solid #b5b5b5;background:#f3f3f3"></div>
<div class="a" style="left:886px;top:110px;width:17px;height:20px;border:1px solid #c6c6c6;background:#f3f3f3"></div>
<svg class="a" style="left:886px;top:70px" width="18" height="60">
 <path d="M1.8 12.9l6.7-6.8 6.7 6.8" fill="none" stroke="#c4c4c4" stroke-width="1"/>
 <path d="M1.8 26.9l6.7 6.8 6.7-6.8" fill="none" stroke="#333" stroke-width="1.1"/>
 <path d="M1 43.6h15" stroke="#333" stroke-width="1.1"/>
 <path d="M1.8 48.2l6.7 6.8 6.7-6.8" fill="none" stroke="#333" stroke-width="1.1"/>
</svg>
<div class="sep" style="left:913px"></div>
<div class="sep" style="left:1042px"></div>
<div class="sep" style="left:1119px"></div>
<div class="sep" style="left:1177px"></div>
<!-- data group icons -->
<svg class="a" style="left:935px;top:64px" width="240" height="42">
 <!-- switch row/col -->
 <rect x="7" y="7.9" width="29" height="4.3" fill="#6d6d6d"/>
 <rect x="7.5" y="12.2" width="28" height="21.4" fill="#fff" stroke="#8f8f8f"/>
 <path d="M7.5 17.5h28M7.5 22.5h28M7.5 28h28M14.5 12v21.5M21.5 12v21.5M28.5 12v21.5" stroke="#b8b8b8" stroke-width="0.9"/>
 <path d="M17.8 17.2h11v10h-11zM17.8 22.2h11M23.3 17.2v10" fill="none" stroke="#e9812d" stroke-width="1.2"/>
 <path d="M10.8 28c-.5-6.5 4-12 12.5-12.2" fill="none" stroke="#3e7cc5" stroke-width="1.8"/>
 <path d="M21.2 12.5l3.6 3.3-3.6 3.3" fill="none" stroke="#3e7cc5" stroke-width="1.6"/>
 <path d="M7.6 25l3.2 3.6 3.2-3.6" fill="none" stroke="#3e7cc5" stroke-width="1.6"/>
 <!-- select data -->
 <rect x="63.7" y="9.3" width="29" height="4" fill="#6d6d6d"/>
 <rect x="64.2" y="13.3" width="28" height="20" fill="#fff" stroke="#8f8f8f"/>
 <path d="M64.2 18.3h28M64.2 23.3h28M64.2 28.3h28M71.2 13.3v20M78.2 13.3v20M85.2 13.3v20" stroke="#b8b8b8" stroke-width="0.9"/>
 <path d="M71.5 28.5v-9.8h14.5v3" fill="none" stroke="#e9812d" stroke-width="1.2"/>
 <rect x="78.5" y="22" width="16.5" height="15.8" fill="#fff" stroke="#7a7a7a"/>
 <path d="M82.5 35.5v-7h2.5v7zM86 35.5v-10h2.5v10zM89.5 35.5v-5.5h2.5v5.5z" fill="#d0d0d0" stroke="#7a7a7a" stroke-width="0.9"/>
 <!-- change chart type -->
 <rect x="134" y="17.5" width="7" height="17" fill="#4a80c3"/>
 <rect x="142" y="9.5" width="7" height="25" fill="#eec679"/>
 <rect x="150" y="14" width="7" height="20.5" fill="#7a7a7a"/>
 <!-- move chart -->
 <path d="M200.5 9.5h27.5v23.5h-13l-2.5 2.5h-7l1.5-2.5h-6.5z" fill="#fff" stroke="#8a8a8a"/>
 <path d="M206 26.5v-8.5h4v8.5zM211 26.5v-13.5h4v13.5zM216 26.5v-10h4v10zM221 26.5v-6h3v6z" fill="#d4d4d4" stroke="#8a8a8a" stroke-width="0.9"/>
</svg>



<div class="t" style="left:10.30px;top:107.43px;font-size:12.01px;color:#262626;transform:scaleX(0.989)">Add Chart</div>
<div class="t" style="left:11.45px;top:123.63px;font-size:12.01px;color:#262626;transform:scaleX(0.985)">Element</div>
<div class="t" style="left:76.02px;top:107.43px;font-size:12.01px;color:#262626;transform:scaleX(1.005)">Quick</div>
<div class="t" style="left:68.64px;top:123.63px;font-size:12.01px;color:#262626">Layout</div>
<div class="t" style="left:134.40px;top:107.43px;font-size:12.01px;color:#262626">Change</div>
<div class="t" style="left:133.70px;top:123.63px;font-size:12.01px;color:#262626">Colors</div>
<div class="t" style="left:487.95px;top:142.87px;font-size:11.73px;color:#262626;transform:scaleX(0.934)">Chart Styles</div>
<div class="t" style="left:923.62px;top:107.43px;font-size:12.01px;color:#262626">Switch Row/</div>
<div class="t" style="left:935.57px;top:123.63px;font-size:12.01px;color:#262626;transform:scaleX(1.052)">Column</div>
<div class="t" style="left:997.55px;top:107.43px;font-size:12.01px;color:#262626;transform:scaleX(0.941)">Select</div>
<div class="t" style="left:1001.90px;top:123.63px;font-size:12.01px;color:#262626;transform:scaleX(0.932)">Data</div>
<div class="t" style="left:1060.70px;top:107.43px;font-size:12.01px;color:#262626;transform:scaleX(0.992)">Change</div>
<div class="t" style="left:1052.82px;top:123.63px;font-size:12.01px;color:#262626;transform:scaleX(0.963)">Chart Type</div>
<div class="t" style="left:1133.39px;top:107.43px;font-size:12.01px;color:#262626;transform:scaleX(1.054)">Move</div>
<div class="t" style="left:1133.74px;top:123.63px;font-size:12.01px;color:#262626;transform:scaleX(1.097)">Chart</div>
<div class="t" style="left:965.70px;top:142.87px;font-size:11.73px;color:#262626;transform:scaleX(0.963)">Data</div>
<div class="t" style="left:1068.99px;top:142.87px;font-size:11.73px;color:#262626;transform:scaleX(0.904)">Type</div>
<div class="t" style="left:1125.56px;top:142.87px;font-size:11.73px;color:#262626;transform:scaleX(1.006)">Location</div>
<!-- sheet -->
<div class="a" style="left:0;top:157px;width:1224px;height:73px;background:#e6e6e6"></div>
<div class="a" style="left:5px;top:167px;width:130px;height:26px;background:#fff;border:1px solid #c8c8c8"></div>
<div class="a" style="left:142px;top:167px;width:105px;height:26px;background:#fdfdfd;border:1px solid #c8c8c8;border-left:none"></div>
<div class="a" style="left:250px;top:167px;width:980px;height:26px;background:#fdfdfd;border:1px solid #c8c8c8"></div>
<svg class="a" style="left:140px;top:167px" width="110" height="26">
 <path d="M151.5 7.5l9 9M160.5 7.5l-9 9" transform="translate(-140 0)" stroke="#bcbcbc" stroke-width="1.5" fill="none"/>
 <path d="M186 12.5l4 4 7.5-8.5" transform="translate(-140 0)" stroke="#cbcbcb" stroke-width="2.3" fill="none"/>
</svg>
<div class="t" style="left:221.5px;top:173px;font-family:'Liberation Serif',serif;font-style:italic;font-weight:bold;font-size:14px;color:#505050">f<span style="font-size:11px">x</span></div>
<div class="a" style="left:0;top:231px;width:1224px;height:492px;background:#fff"></div>
<div class="a" style="left:0;top:230px;width:1224px;height:1px;background:#9e9e9e"></div>
<div class="a" style="left:0;top:231px;width:40px;height:492px;background:#e6e6e6;border-right:1px solid #bdbdbd"></div>
<div class="a" style="left:252px;top:203px;width:1px;height:27px;background:#a8a8a8"></div>
<div class="a" style="left:393px;top:203px;width:1px;height:27px;background:#a8a8a8"></div>
<div class="a" style="left:537px;top:203px;width:1px;height:27px;background:#a8a8a8"></div>
<div class="a" style="left:627px;top:203px;width:1px;height:27px;background:#a8a8a8"></div>
<div class="a" style="left:717px;top:203px;width:1px;height:27px;background:#a8a8a8"></div>
<div class="a" style="left:807px;top:203px;width:1px;height:27px;background:#a8a8a8"></div>
<div class="a" style="left:897px;top:203px;width:1px;height:27px;background:#a8a8a8"></div>
<div class="a" style="left:987px;top:203px;width:1px;height:27px;background:#a8a8a8"></div>
<div class="a" style="left:1077px;top:203px;width:1px;height:27px;background:#a8a8a8"></div>
<div class="a" style="left:1167px;top:203px;width:1px;height:27px;background:#a8a8a8"></div>
<div class="a" style="left:116px;top:231px;width:1px;height:492px;background:#d9d9d9"></div>
<div class="a" style="left:252px;top:231px;width:1px;height:492px;background:#d9d9d9"></div>
<div class="a" style="left:393px;top:231px;width:1px;height:492px;background:#d9d9d9"></div>
<div class="a" style="left:537px;top:231px;width:1px;height:492px;background:#d9d9d9"></div>
<div class="a" style="left:627px;top:231px;width:1px;height:492px;background:#d9d9d9"></div>
<div class="a" style="left:717px;top:231px;width:1px;height:492px;background:#d9d9d9"></div>
<div class="a" style="left:807px;top:231px;width:1px;height:492px;background:#d9d9d9"></div>
<div class="a" style="left:987px;top:231px;width:1px;height:492px;background:#d9d9d9"></div>
<div class="a" style="left:1077px;top:231px;width:1px;height:492px;background:#d9d9d9"></div>
<div class="a" style="left:1167px;top:231px;width:1px;height:492px;background:#d9d9d9"></div>
<div class="a" style="left:897px;top:231px;width:1px;height:492px;background:repeating-linear-gradient(#8c8c8c 0 4px,transparent 4px 7px)"></div>
<div class="a" style="left:39px;top:293px;width:1185px;height:1px;background:#d9d9d9"></div>
<div class="a" style="left:0;top:293px;width:39px;height:1px;background:#c6c6c6"></div>
<div class="a" style="left:39px;top:321px;width:1185px;height:1px;background:#d9d9d9"></div>
<div class="a" style="left:0;top:321px;width:39px;height:1px;background:#c6c6c6"></div>
<div class="a" style="left:39px;top:349px;width:1185px;height:1px;background:#d9d9d9"></div>
<div class="a" style="left:0;top:349px;width:39px;height:1px;background:#c6c6c6"></div>
<div class="a" style="left:39px;top:377px;width:1185px;height:1px;background:#d9d9d9"></div>
<div class="a" style="left:0;top:377px;width:39px;height:1px;background:#c6c6c6"></div>
<div class="a" style="left:39px;top:405px;width:1185px;height:1px;background:#d9d9d9"></div>
<div class="a" style="left:0;top:405px;width:39px;height:1px;background:#c6c6c6"></div>
<div class="a" style="left:39px;top:433px;width:1185px;height:1px;background:#d9d9d9"></div>
<div class="a" style="left:0;top:433px;width:39px;height:1px;background:#c6c6c6"></div>
<div class="a" style="left:39px;top:461px;width:1185px;height:1px;background:#d9d9d9"></div>
<div class="a" style="left:0;top:461px;width:39px;height:1px;background:#c6c6c6"></div>
<div class="a" style="left:39px;top:489px;width:1185px;height:1px;background:#d9d9d9"></div>
<div class="a" style="left:0;top:489px;width:39px;height:1px;background:#c6c6c6"></div>
<div class="a" style="left:39px;top:517px;width:1185px;height:1px;background:#d9d9d9"></div>
<div class="a" style="left:0;top:517px;width:39px;height:1px;background:#c6c6c6"></div>
<div class="a" style="left:39px;top:545px;width:1185px;height:1px;background:#d9d9d9"></div>
<div class="a" style="left:0;top:545px;width:39px;height:1px;background:#c6c6c6"></div>
<div class="a" style="left:39px;top:573px;width:1185px;height:1px;background:#d9d9d9"></div>
<div class="a" style="left:0;top:573px;width:39px;height:1px;background:#c6c6c6"></div>
<div class="a" style="left:39px;top:601px;width:1185px;height:1px;background:#d9d9d9"></div>
<div class="a" style="left:0;top:601px;width:39px;height:1px;background:#c6c6c6"></div>
<div class="a" style="left:39px;top:629px;width:1185px;height:1px;background:#d9d9d9"></div>
<div class="a" style="left:0;top:629px;width:39px;height:1px;background:#c6c6c6"></div>
<div class="a" style="left:39px;top:657px;width:1185px;height:1px;background:#d9d9d9"></div>
<div class="a" style="left:0;top:657px;width:39px;height:1px;background:#c6c6c6"></div>
<div class="a" style="left:39px;top:685px;width:1185px;height:1px;background:#d9d9d9"></div>
<div class="a" style="left:0;top:685px;width:39px;height:1px;background:#c6c6c6"></div>
<div class="a" style="left:39px;top:713px;width:1185px;height:1px;background:#d9d9d9"></div>
<div class="a" style="left:0;top:713px;width:39px;height:1px;background:#c6c6c6"></div>
<div class="a" style="left:116px;top:231px;width:277px;height:63px;background:#92d050"></div>
<div class="a" style="left:252px;top:231px;width:1px;height:63px;background:#000"></div>
<div class="a" style="left:393px;top:231px;width:1px;height:67px;background:#000"></div>
<div class="a" style="left:116px;top:293px;width:277px;height:1px;background:#000"></div>
<div class="a" style="left:116px;top:294px;width:137px;height:336px;background:#b4c6e7"></div>
<div class="a" style="left:253px;top:294px;width:140px;height:4px;background:#fff2cc"></div>
<div class="a" style="left:252px;top:294px;width:1px;height:4px;background:#000"></div>

<div class="a" style="left:40px;top:293px;width:76px;height:337px;background:#d0cece"></div>
<div class="a" style="left:40px;top:293px;width:77px;height:1px;background:#000"></div>
<div class="a" style="left:40px;top:321px;width:77px;height:1px;background:#000"></div>
<div class="a" style="left:40px;top:349px;width:77px;height:1px;background:#000"></div>
<div class="a" style="left:40px;top:377px;width:77px;height:1px;background:#000"></div>
<div class="a" style="left:40px;top:405px;width:77px;height:1px;background:#000"></div>
<div class="a" style="left:40px;top:433px;width:77px;height:1px;background:#000"></div>
<div class="a" style="left:40px;top:461px;width:77px;height:1px;background:#000"></div>
<div class="a" style="left:40px;top:489px;width:77px;height:1px;background:#000"></div>
<div class="a" style="left:40px;top:517px;width:77px;height:1px;background:#000"></div>
<div class="a" style="left:40px;top:545px;width:77px;height:1px;background:#000"></div>
<div class="a" style="left:40px;top:573px;width:77px;height:1px;background:#000"></div>
<div class="a" style="left:40px;top:601px;width:77px;height:1px;background:#000"></div>
<div class="a" style="left:40px;top:629px;width:77px;height:1px;background:#000"></div>
<div class="a" style="left:115px;top:293px;width:1px;height:337px;background:#000"></div>


<div class="t" style="left:178.74px;top:208.47px;font-size:17.88px;color:#222">B</div>
<div class="t" style="left:316.39px;top:208.47px;font-size:17.88px;color:#222">C</div>
<div class="t" style="left:459.21px;top:208.47px;font-size:17.88px;color:#222">D</div>
<div class="t" style="left:576.65px;top:208.47px;font-size:17.88px;color:#222">E</div>
<div class="t" style="left:667.10px;top:208.47px;font-size:17.88px;color:#222">F</div>
<div class="t" style="left:756.21px;top:208.47px;font-size:17.88px;color:#222">G</div>
<div class="t" style="left:846.47px;top:208.47px;font-size:17.88px;color:#222">H</div>
<div class="t" style="left:940.50px;top:208.47px;font-size:17.88px;color:#222">I</div>
<div class="t" style="left:1029.07px;top:208.47px;font-size:17.88px;color:#222">J</div>
<div class="t" style="left:1116.39px;top:208.47px;font-size:17.88px;color:#222">K</div>
<div class="t" style="left:1207.55px;top:208.47px;font-size:17.88px;color:#222">L</div>
<div class="t" style="left:15.77px;top:300.70px;font-size:17.60px;color:#222">2</div>
<div class="t" style="left:15.86px;top:328.70px;font-size:17.60px;color:#222">3</div>
<div class="t" style="left:15.86px;top:356.70px;font-size:17.60px;color:#222">4</div>
<div class="t" style="left:15.77px;top:384.70px;font-size:17.60px;color:#222">5</div>
<div class="t" style="left:15.68px;top:412.70px;font-size:17.60px;color:#222">6</div>
<div class="t" style="left:15.77px;top:440.70px;font-size:17.60px;color:#222">7</div>
<div class="t" style="left:15.77px;top:468.70px;font-size:17.60px;color:#222">8</div>
<div class="t" style="left:15.86px;top:496.70px;font-size:17.60px;color:#222">9</div>
<div class="t" style="left:10.62px;top:524.70px;font-size:17.60px;color:#222">10</div>
<div class="t" style="left:11.36px;top:552.70px;font-size:17.60px;color:#222">11</div>
<div class="t" style="left:10.70px;top:580.70px;font-size:17.60px;color:#222">12</div>
<div class="t" style="left:10.62px;top:608.70px;font-size:17.60px;color:#222">13</div>
<div class="t" style="left:10.53px;top:636.70px;font-size:17.60px;color:#222">14</div>
<div class="t" style="left:10.62px;top:664.70px;font-size:17.60px;color:#222">15</div>
<div class="t" style="left:10.62px;top:692.70px;font-size:17.60px;color:#222">16</div>
<div class="t" style="left:10.70px;top:720.70px;font-size:17.60px;color:#222">17</div>
<div class="t" style="left:64.22px;top:300.80px;font-size:17.60px;color:#111">Jan</div>
<div class="t" style="left:62.45px;top:328.80px;font-size:17.60px;color:#111">Feb</div>
<div class="t" style="left:62.26px;top:356.80px;font-size:17.60px;color:#111">Mar</div>
<div class="t" style="left:64.42px;top:384.80px;font-size:17.60px;color:#111">Apr</div>
<div class="t" style="left:58.49px;top:412.80px;font-size:17.60px;color:#111;transform:scaleX(1.143)">May</div>
<div class="t" style="left:62.51px;top:440.80px;font-size:17.60px;color:#111;transform:scaleX(1.058)">Jun</div>
<div class="t" style="left:65.72px;top:468.80px;font-size:17.60px;color:#111;transform:scaleX(1.051)">Jul</div>
<div class="t" style="left:61.20px;top:496.80px;font-size:17.60px;color:#111;transform:scaleX(1.068)">Aug</div>
<div class="t" style="left:61.70px;top:524.80px;font-size:17.60px;color:#111;transform:scaleX(0.994)">Sep</div>
<div class="t" style="left:62.74px;top:552.80px;font-size:17.60px;color:#111;transform:scaleX(1.074)">Oct</div>
<div class="t" style="left:60.33px;top:580.80px;font-size:17.60px;color:#111;transform:scaleX(1.118)">Nov</div>
<div class="t" style="left:61.31px;top:608.80px;font-size:17.60px;color:#111;transform:scaleX(1.060)">Dec</div>
<div class="t" style="left:136.72px;top:240.94px;font-size:17.32px;color:#111;font-weight:bold">Advertising</div>
<div class="t" style="left:125.42px;top:268.35px;font-size:18.02px;color:#111;font-weight:bold">Budget (USD)</div>
<div class="t" style="left:262.13px;top:240.94px;font-size:17.32px;color:#111;font-weight:bold;transform:scaleX(1.026)">Nos. Products</div>
<div class="t" style="left:303.05px;top:268.35px;font-size:18.02px;color:#111;font-weight:bold;transform:scaleX(0.979)">Sold</div>
<!-- chart -->
<div class="a" style="left:120px;top:297px;width:674px;height:403px;background:#fff"></div>
<svg class="a" style="left:0;top:0" width="1224" height="723"><line x1="164" y1="607.5" x2="761" y2="607.5" stroke="#d9d9d9" stroke-width="1"/><line x1="164" y1="559.5" x2="761" y2="559.5" stroke="#d9d9d9" stroke-width="1"/><line x1="164" y1="511.5" x2="761" y2="511.5" stroke="#d9d9d9" stroke-width="1"/><line x1="164" y1="462.5" x2="761" y2="462.5" stroke="#d9d9d9" stroke-width="1"/><line x1="164" y1="414.5" x2="761" y2="414.5" stroke="#d9d9d9" stroke-width="1"/><line x1="164" y1="365.5" x2="761" y2="365.5" stroke="#d9d9d9" stroke-width="1"/><line x1="164.5" y1="365" x2="164.5" y2="656" stroke="#d9d9d9" stroke-width="1"/><line x1="263.5" y1="365" x2="263.5" y2="656" stroke="#d9d9d9" stroke-width="1"/><line x1="363.5" y1="365" x2="363.5" y2="656" stroke="#d9d9d9" stroke-width="1"/><line x1="462.5" y1="365" x2="462.5" y2="656" stroke="#d9d9d9" stroke-width="1"/><line x1="561.5" y1="365" x2="561.5" y2="656" stroke="#d9d9d9" stroke-width="1"/><line x1="661.5" y1="365" x2="661.5" y2="656" stroke="#d9d9d9" stroke-width="1"/><line x1="760.5" y1="365" x2="760.5" y2="656" stroke="#d9d9d9" stroke-width="1"/><line x1="164" y1="655.5" x2="761" y2="655.5" stroke="#c4c4c4" stroke-width="1"/><line x1="393.4" y1="572.3" x2="665.3" y2="431.5" stroke="#4472c4" stroke-width="2.8" stroke-linecap="round" stroke-dasharray="0.01 5.57"/><circle cx="392.4" cy="563.3" r="4.9" fill="#4472c4"/><circle cx="392.4" cy="587.4" r="4.9" fill="#4472c4"/><circle cx="402.4" cy="578.4" r="4.9" fill="#4472c4"/><circle cx="416.4" cy="553.3" r="4.9" fill="#4472c4"/><circle cx="441.3" cy="539.4" r="4.9" fill="#4472c4"/><circle cx="456.5" cy="515.5" r="4.9" fill="#4472c4"/><circle cx="541.3" cy="495.6" r="4.9" fill="#4472c4"/><circle cx="605.4" cy="481.4" r="4.9" fill="#4472c4"/><circle cx="615.4" cy="461.5" r="4.9" fill="#4472c4"/><circle cx="640.3" cy="437.2" r="4.9" fill="#4472c4"/><circle cx="665.3" cy="418.4" r="4.9" fill="#4472c4"/><circle cx="665.3" cy="427.6" r="4.9" fill="#4472c4"/><rect x="120.5" y="297.5" width="672.5" height="401.5" fill="none" stroke="#8f8f8f" stroke-width="1.2"/><circle cx="120.5" cy="297.5" r="4.8" fill="#fff" stroke="#8f8f8f" stroke-width="1.6"/><circle cx="456.5" cy="297.5" r="4.8" fill="#fff" stroke="#8f8f8f" stroke-width="1.6"/><circle cx="793" cy="297.5" r="4.8" fill="#fff" stroke="#8f8f8f" stroke-width="1.6"/><circle cx="120.5" cy="498" r="4.8" fill="#fff" stroke="#8f8f8f" stroke-width="1.6"/><circle cx="793" cy="498" r="4.8" fill="#fff" stroke="#8f8f8f" stroke-width="1.6"/><circle cx="120.5" cy="699" r="4.8" fill="#fff" stroke="#8f8f8f" stroke-width="1.6"/><circle cx="456.5" cy="699" r="4.8" fill="#fff" stroke="#8f8f8f" stroke-width="1.6"/><circle cx="793" cy="699" r="4.8" fill="#fff" stroke="#8f8f8f" stroke-width="1.6"/></svg>
<div class="a" style="left:807px;top:296px;width:28px;height:28px;background:#fff;border:1px solid #a6a6a6"></div>
<div class="a" style="left:807px;top:334px;width:28px;height:28px;background:#fff;border:1px solid #a6a6a6"></div>
<div class="a" style="left:807px;top:372px;width:28px;height:28px;background:#fff;border:1px solid #a6a6a6"></div>
<svg class="a" style="left:800px;top:290px" width="40" height="115">
 <rect x="14.3" y="18" width="13.6" height="3.8" fill="#5fa084"/>
 <rect x="18.9" y="13.2" width="4.3" height="13.6" fill="#5fa084"/>
 <path d="M29.6 49l-5.2 6.5" stroke="#6b6b6b" stroke-width="2.6" stroke-linecap="butt"/>
 <path d="M24.3 55.5l-1.6 2" stroke="#6b6b6b" stroke-width="1.4"/>
 <path d="M22.5 57c-2.2-.9-4.3-.1-5.3 1.7-1 1.8-2.5 3.6-4.6 5 3.3.8 7.1.1 9.2-1.8 1.6-1.4 2-3.5.7-4.9z" fill="#4a80c3"/>
 <path d="M20.6 59.8c-.8.5-1.2 1.3-1 2.1" stroke="#fff" stroke-width="1" fill="none"/>
 <path d="M12.1 88h17.8l-6.8 7.3v8.3h-3.6v-8.3z" fill="#7a7a7a"/>
 <path d="M15.5 89.5h11" stroke="#7a7a7a" stroke-width="1"/>
 <path d="M20.6 96v6.3" stroke="#fff" stroke-width="1"/>
</svg>
<div class="t" style="left:159.89px;top:669.70px;font-size:15.36px;color:#595959;transform:scaleX(1.103)">0</div>
<div class="t" style="left:255.09px;top:669.70px;font-size:15.36px;color:#595959;transform:scaleX(1.053)">20</div>
<div class="t" style="left:354.66px;top:669.70px;font-size:15.36px;color:#595959;transform:scaleX(1.091)">40</div>
<div class="t" style="left:453.78px;top:669.70px;font-size:15.36px;color:#595959;transform:scaleX(1.072)">60</div>
<div class="t" style="left:552.82px;top:669.70px;font-size:15.36px;color:#595959;transform:scaleX(1.106)">80</div>
<div class="t" style="left:647.79px;top:669.70px;font-size:15.36px;color:#595959;transform:scaleX(1.033)">100</div>
<div class="t" style="left:747.39px;top:669.70px;font-size:15.36px;color:#595959;transform:scaleX(1.033)">120</div>
<div class="t" style="left:140.32px;top:647.70px;font-size:15.36px;color:#595959;transform:scaleX(1.049)">0</div>
<div class="t" style="left:131.69px;top:599.70px;font-size:15.36px;color:#595959;transform:scaleX(1.029)">10</div>
<div class="t" style="left:132.03px;top:551.70px;font-size:15.36px;color:#595959;transform:scaleX(1.009)">20</div>
<div class="t" style="left:132.34px;top:503.70px;font-size:15.36px;color:#595959;transform:scaleX(0.989)">30</div>
<div class="t" style="left:132.50px;top:454.70px;font-size:15.36px;color:#595959;transform:scaleX(0.980)">40</div>
<div class="t" style="left:132.19px;top:406.70px;font-size:15.36px;color:#595959">50</div>
<div class="t" style="left:132.03px;top:357.70px;font-size:15.36px;color:#595959;transform:scaleX(1.009)">60</div>
<div class="t" style="left:357.44px;top:318.16px;font-size:21.79px;color:#595959;transform:scaleX(1.066)">Nos. Products Sold</div>
<!-- menus -->
<div class="a" style="left:8px;top:136px;width:135px;height:268px;background:#fff;border:1px solid #c6c6c6;box-shadow:0 1px 4px rgba(0,0,0,0.18)"></div>
<div class="a" style="left:9px;top:354px;width:133px;height:24px;background:#c5c5c5"></div>
<svg class="a" style="left:0;top:0" width="140" height="410"><rect x="22" y="145.0" width="2" height="9.0" fill="#a9a9a9"/><path d="M18.5 154.5V148.5H21.5V154.5M21.5 148.5V144.5H24.5V154.5M24.5 148.5H27.5V154.5M18 154.5H28" fill="none" stroke="#6d6d6d" stroke-width="1"/><path d="M14.5 143.2v12.2h15.4" fill="none" stroke="#e46c0a" stroke-width="1.2"/><path d="M13 145h1.5M13 147.5h1.5M13 150h1.5M13 152.5h1.5M17 156.5v1.2M19.5 156.5v1.2M22 156.5v1.2M24.5 156.5v1.2M27 156.5v1.2M29.5 156.5v1.2" stroke="#e46c0a" stroke-width="0.9"/><rect x="22" y="169.0" width="2" height="8.0" fill="#a9a9a9"/><path d="M18.5 177.5V172.5H21.5V177.5M21.5 172.5V168.5H24.5V177.5M24.5 172.5H27.5V177.5M18 177.5H28" fill="none" stroke="#6d6d6d" stroke-width="1"/><rect x="15.2" y="168" width="1.9" height="9.8" fill="#e46c0a"/><rect x="18" y="179.3" width="10" height="1.6" fill="#e46c0a"/><rect x="21" y="195.0" width="2" height="8.0" fill="#a9a9a9"/><path d="M17.5 203.5V198.5H20.5V203.5M20.5 198.5V194.5H23.5V203.5M23.5 198.5H26.5V203.5M17 203.5H27" fill="none" stroke="#6d6d6d" stroke-width="1"/><rect x="17" y="191" width="10" height="1.8" fill="#e46c0a"/><rect x="21" y="219.0" width="2" height="8.0" fill="#a9a9a9"/><path d="M17.5 227.5V222.5H20.5V227.5M20.5 222.5V218.5H23.5V227.5M23.5 222.5H26.5V227.5M17 227.5H27" fill="none" stroke="#6d6d6d" stroke-width="1"/><rect x="21" y="215" width="2" height="2" fill="#e46c0a"/><rect x="16.8" y="218" width="2" height="2" fill="#e46c0a"/><rect x="25.2" y="219" width="2" height="2" fill="#e46c0a"/><path d="M16.5 240.4v7" stroke="#c8c8c8" stroke-width="1"/><rect x="22" y="241.0" width="2" height="6.0" fill="#e2e2e2"/><path d="M18.5 247.5V243.5H21.5V247.5M21.5 243.5V240.5H24.5V247.5M24.5 245.5H27.5V247.5M18 247.5H28" fill="none" stroke="#c8c8c8" stroke-width="1"/><path d="M16.5 247.5h12v4.5h-12zM16.5 249.7h12M22.5 247.5v4.5" fill="none" stroke="#c8c8c8" stroke-width="1"/><rect x="21" y="267.0" width="2" height="7.0" fill="#a9a9a9"/><path d="M17.5 274.5V269.5H20.5V274.5M20.5 269.5V266.5H23.5V274.5M23.5 269.5H26.5V274.5M17 274.5H27" fill="none" stroke="#6d6d6d" stroke-width="1"/><path d="M18.6 265.8v3.5M22.4 262.8v3.5M25.8 265.8v3.5" stroke="#e46c0a" stroke-width="1"/><path d="M16.2 288.5h11.7M16.2 291.8h11.7M16.2 295.2h11.7M16.2 298.5h11.7M16.7 288v11M19.8 288v11M22.6 288v11M25.4 288v11M27.9 288v11" stroke="#f3a76a" stroke-width="0.9"/><rect x="22" y="292.0" width="2" height="6.0" fill="#a9a9a9"/><path d="M18.5 298.5V294.5H21.5V298.5M21.5 294.5V291.5H24.5V298.5M24.5 296.5H27.5V298.5M18 298.5H28" fill="none" stroke="#6d6d6d" stroke-width="1"/><rect x="18" y="317.0" width="2" height="8.0" fill="#a9a9a9"/><path d="M14.5 325.5V319.5H17.5V325.5M17.5 319.5V316.5H20.5V325.5M20.5 321.5H23.5V325.5M14 325.5H24" fill="none" stroke="#6d6d6d" stroke-width="1"/><rect x="22.7" y="310.5" width="7" height="8" fill="#fff" stroke="#e46c0a" stroke-width="1.2"/><rect x="24.2" y="312" width="1" height="1" fill="#4a80c3"/><rect x="24.2" y="314" width="1" height="1" fill="#e0522f"/><rect x="24.2" y="316" width="1" height="1" fill="#5ab0a0"/><path d="M26 312.5h2.3M26 314.5h2.3M26 316.5h2.3" stroke="#e46c0a" stroke-width="0.9"/><path d="M14.3 335.2v13.2h14.6" fill="none" stroke="#c8c8c8" stroke-width="1"/><path d="M16.5 340.5l3-2.5 3 2.5 5.5-4v9l-5.5 1.5-3-2-3 2z M19.5 338v6.5M22.5 340.5v5.5" fill="none" stroke="#c8c8c8" stroke-width="0.9"/><path d="M14.3 359v13.3h14.6" fill="none" stroke="#6d6d6d" stroke-width="1"/><path d="M16 369.3c5 0 10-2 11.8-9.8" fill="none" stroke="#e46c0a" stroke-width="1.2"/><rect x="16.8" y="365.0" width="1.2" height="1.2" fill="#333"/><rect x="20.0" y="366.0" width="1.2" height="1.2" fill="#333"/><rect x="24.0" y="362.0" width="1.2" height="1.2" fill="#333"/><rect x="29.0" y="360.0" width="1.2" height="1.2" fill="#333"/><rect x="19.0" y="369.8" width="1.2" height="1.2" fill="#333"/><rect x="25.0" y="369.8" width="1.2" height="1.2" fill="#333"/><rect x="26.0" y="366.8" width="1.2" height="1.2" fill="#333"/><path d="M14.3 383v13.3h14.6" fill="none" stroke="#c8c8c8" stroke-width="1"/><path d="M17.5 387.5v6.5M20 387.5v6.5M20 387.5l8 6.5v-6.5l-8 6.5" fill="none" stroke="#c8c8c8" stroke-width="0.9"/><path d="M128 146l4.3 3.6-4.3 3.6z" fill="#8a8a8a"/><path d="M128 170l4.3 3.6-4.3 3.6z" fill="#8a8a8a"/><path d="M128 194l4.3 3.6-4.3 3.6z" fill="#8a8a8a"/><path d="M128 218l4.3 3.6-4.3 3.6z" fill="#8a8a8a"/><path d="M128 242l4.3 3.6-4.3 3.6z" fill="#8a8a8a"/><path d="M128 266l4.3 3.6-4.3 3.6z" fill="#8a8a8a"/><path d="M128 290l4.3 3.6-4.3 3.6z" fill="#8a8a8a"/><path d="M128 314l4.3 3.6-4.3 3.6z" fill="#8a8a8a"/><path d="M128 338l4.3 3.6-4.3 3.6z" fill="#8a8a8a"/><path d="M128 362l4.3 3.6-4.3 3.6z" fill="#8a8a8a"/><path d="M128 386l4.3 3.6-4.3 3.6z" fill="#8a8a8a"/></svg>
<div class="a" style="left:141px;top:354px;width:193px;height:250px;background:#fff;border:1px solid #c6c6c6;box-shadow:0 1px 4px rgba(0,0,0,0.18)"></div>
<div class="a" style="left:143px;top:400px;width:189px;height:44px;background:#c5c5c5"></div>
<div class="a" style="left:143px;top:576px;width:189px;height:1px;background:#e1e1e1"></div>
<svg class="a" style="left:0;top:0" width="340" height="610"><path d="M152.6 366.2V389.6H170.5" fill="none" stroke="#7a7a7a" stroke-width="1"/><rect x="155.0" y="382.0" width="1.2" height="1.2" fill="#333"/><rect x="157.0" y="378.0" width="1.2" height="1.2" fill="#333"/><rect x="159.0" y="376.0" width="1.2" height="1.2" fill="#333"/><rect x="162.0" y="380.0" width="1.2" height="1.2" fill="#333"/><rect x="165.0" y="373.0" width="1.2" height="1.2" fill="#333"/><rect x="167.0" y="378.0" width="1.2" height="1.2" fill="#333"/><rect x="170.0" y="370.0" width="1.2" height="1.2" fill="#333"/><rect x="173.0" y="369.0" width="1.2" height="1.2" fill="#333"/><rect x="175.0" y="373.0" width="1.2" height="1.2" fill="#333"/><rect x="159.0" y="384.0" width="1.2" height="1.2" fill="#333"/><path d="M155 384.9L176.8 366.5" stroke="#f0a05a" stroke-width="1.2"/><path d="M171.8 385.5l7.4 7.4M179.2 385.5l-7.4 7.4" stroke="#e0522f" stroke-width="2.2"/><path d="M152.6 410V433.5H178" fill="none" stroke="#7a7a7a" stroke-width="1"/><rect x="155.0" y="425.0" width="1.2" height="1.2" fill="#333"/><rect x="157.0" y="421.0" width="1.2" height="1.2" fill="#333"/><rect x="159.0" y="419.0" width="1.2" height="1.2" fill="#333"/><rect x="162.0" y="423.0" width="1.2" height="1.2" fill="#333"/><rect x="165.0" y="416.0" width="1.2" height="1.2" fill="#333"/><rect x="167.0" y="421.0" width="1.2" height="1.2" fill="#333"/><rect x="170.0" y="413.0" width="1.2" height="1.2" fill="#333"/><rect x="173.0" y="412.0" width="1.2" height="1.2" fill="#333"/><rect x="175.0" y="416.0" width="1.2" height="1.2" fill="#333"/><rect x="159.0" y="428.0" width="1.2" height="1.2" fill="#333"/><path d="M155 428.7L176.8 410.4" stroke="#f0a05a" stroke-width="1.2"/><path d="M152.6 453V476.4H177.8" fill="none" stroke="#7a7a7a" stroke-width="1"/><rect x="155.0" y="466.0" width="1.2" height="1.2" fill="#333"/><rect x="157.0" y="472.0" width="1.2" height="1.2" fill="#333"/><rect x="159.0" y="468.0" width="1.2" height="1.2" fill="#333"/><rect x="161.0" y="467.0" width="1.2" height="1.2" fill="#333"/><rect x="164.0" y="473.0" width="1.2" height="1.2" fill="#333"/><rect x="165.0" y="465.0" width="1.2" height="1.2" fill="#333"/><rect x="169.0" y="469.0" width="1.2" height="1.2" fill="#333"/><rect x="171.0" y="468.0" width="1.2" height="1.2" fill="#333"/><rect x="171.0" y="459.0" width="1.2" height="1.2" fill="#333"/><rect x="175.0" y="457.0" width="1.2" height="1.2" fill="#333"/><path d="M154.4 471.3C158 472.5 162 472.5 166 469.5C171 466 174 461 175.8 454.3" fill="none" stroke="#f0a05a" stroke-width="1.2"/><path d="M152.6 497.8V521.5H177.8" fill="none" stroke="#7a7a7a" stroke-width="1"/><rect x="156.0" y="514.0" width="1.2" height="1.2" fill="#333"/><rect x="158.0" y="512.0" width="1.2" height="1.2" fill="#333"/><rect x="160.0" y="510.0" width="1.2" height="1.2" fill="#333"/><rect x="162.0" y="508.0" width="1.2" height="1.2" fill="#333"/><rect x="165.0" y="507.0" width="1.2" height="1.2" fill="#333"/><rect x="157.0" y="517.0" width="1.2" height="1.2" fill="#333"/><rect x="161.0" y="517.0" width="1.2" height="1.2" fill="#333"/><rect x="164.0" y="514.0" width="1.2" height="1.2" fill="#333"/><rect x="168.0" y="512.0" width="1.2" height="1.2" fill="#333"/><path d="M155 517L179.4 503.3" stroke="#f0a05a" stroke-width="1.2"/><path d="M152.6 541.6V565H177.8" fill="none" stroke="#7a7a7a" stroke-width="1"/><rect x="155.0" y="554.0" width="1.2" height="1.2" fill="#333"/><rect x="155.0" y="561.0" width="1.2" height="1.2" fill="#333"/><rect x="158.0" y="557.0" width="1.2" height="1.2" fill="#333"/><rect x="163.0" y="563.0" width="1.2" height="1.2" fill="#333"/><rect x="163.0" y="552.0" width="1.2" height="1.2" fill="#333"/><rect x="166.0" y="556.0" width="1.2" height="1.2" fill="#333"/><rect x="168.0" y="551.0" width="1.2" height="1.2" fill="#333"/><rect x="169.0" y="544.0" width="1.2" height="1.2" fill="#333"/><rect x="173.0" y="543.0" width="1.2" height="1.2" fill="#333"/><rect x="175.0" y="546.0" width="1.2" height="1.2" fill="#333"/><path d="M154.4 556.6L160.4 563.5L167.2 549L169.9 546.2L176.9 543.1" fill="none" stroke="#f0a05a" stroke-width="1.2"/></svg>
<div class="t" style="left:42.20px;top:144.41px;font-size:12.15px;color:#444;transform:scaleX(0.923)">A<u>x</u>es</div>
<div class="t" style="left:42.20px;top:168.41px;font-size:12.15px;color:#444;transform:scaleX(0.948)"><u>A</u>xis Titles</div>
<div class="t" style="left:41.60px;top:192.41px;font-size:12.15px;color:#444;transform:scaleX(0.986)"><u>C</u>hart Title</div>
<div class="t" style="left:41.29px;top:216.41px;font-size:12.15px;color:#444;transform:scaleX(0.938)"><u>D</u>ata Labels</div>
<div class="t" style="left:41.26px;top:240.41px;font-size:12.15px;color:#a6a6a6;transform:scaleX(0.967)">Data T<u>a</u>ble</div>
<div class="t" style="left:41.31px;top:264.41px;font-size:12.15px;color:#444;transform:scaleX(0.920)"><u>E</u>rror Bars</div>
<div class="t" style="left:41.61px;top:288.41px;font-size:12.15px;color:#444;transform:scaleX(0.969)"><u>G</u>ridlines</div>
<div class="t" style="left:41.25px;top:312.41px;font-size:12.15px;color:#444;transform:scaleX(0.982)"><u>L</u>egend</div>
<div class="t" style="left:41.27px;top:336.41px;font-size:12.15px;color:#a6a6a6;transform:scaleX(0.953)">L<u>i</u>nes</div>
<div class="t" style="left:41.96px;top:360.41px;font-size:12.15px;color:#444;transform:scaleX(0.983)"><u>T</u>rendline</div>
<div class="t" style="left:41.37px;top:384.41px;font-size:12.15px;color:#a6a6a6;transform:scaleX(0.980)"><u>U</u>p/Down Bars</div>
<div class="t" style="left:194.30px;top:372.41px;font-size:12.15px;color:#444;transform:scaleX(1.031)"><u>N</u>one</div>
<div class="t" style="left:194.36px;top:416.41px;font-size:12.15px;color:#444;transform:scaleX(0.971)"><u>L</u>inear</div>
<div class="t" style="left:194.33px;top:460.41px;font-size:12.15px;color:#444;transform:scaleX(0.994)"><u>E</u>xponential</div>
<div class="t" style="left:194.38px;top:504.41px;font-size:12.15px;color:#444;transform:scaleX(0.943)">Linear <u>F</u>orecast</div>
<div class="t" style="left:194.32px;top:548.41px;font-size:12.15px;color:#444;transform:scaleX(1.005)">Moving <u>A</u>verage</div>
<div class="t" style="left:174.14px;top:584.35px;font-size:11.87px;color:#444;transform:scaleX(1.014)"><u>M</u>ore Trendline Options...</div>
</body></html>
